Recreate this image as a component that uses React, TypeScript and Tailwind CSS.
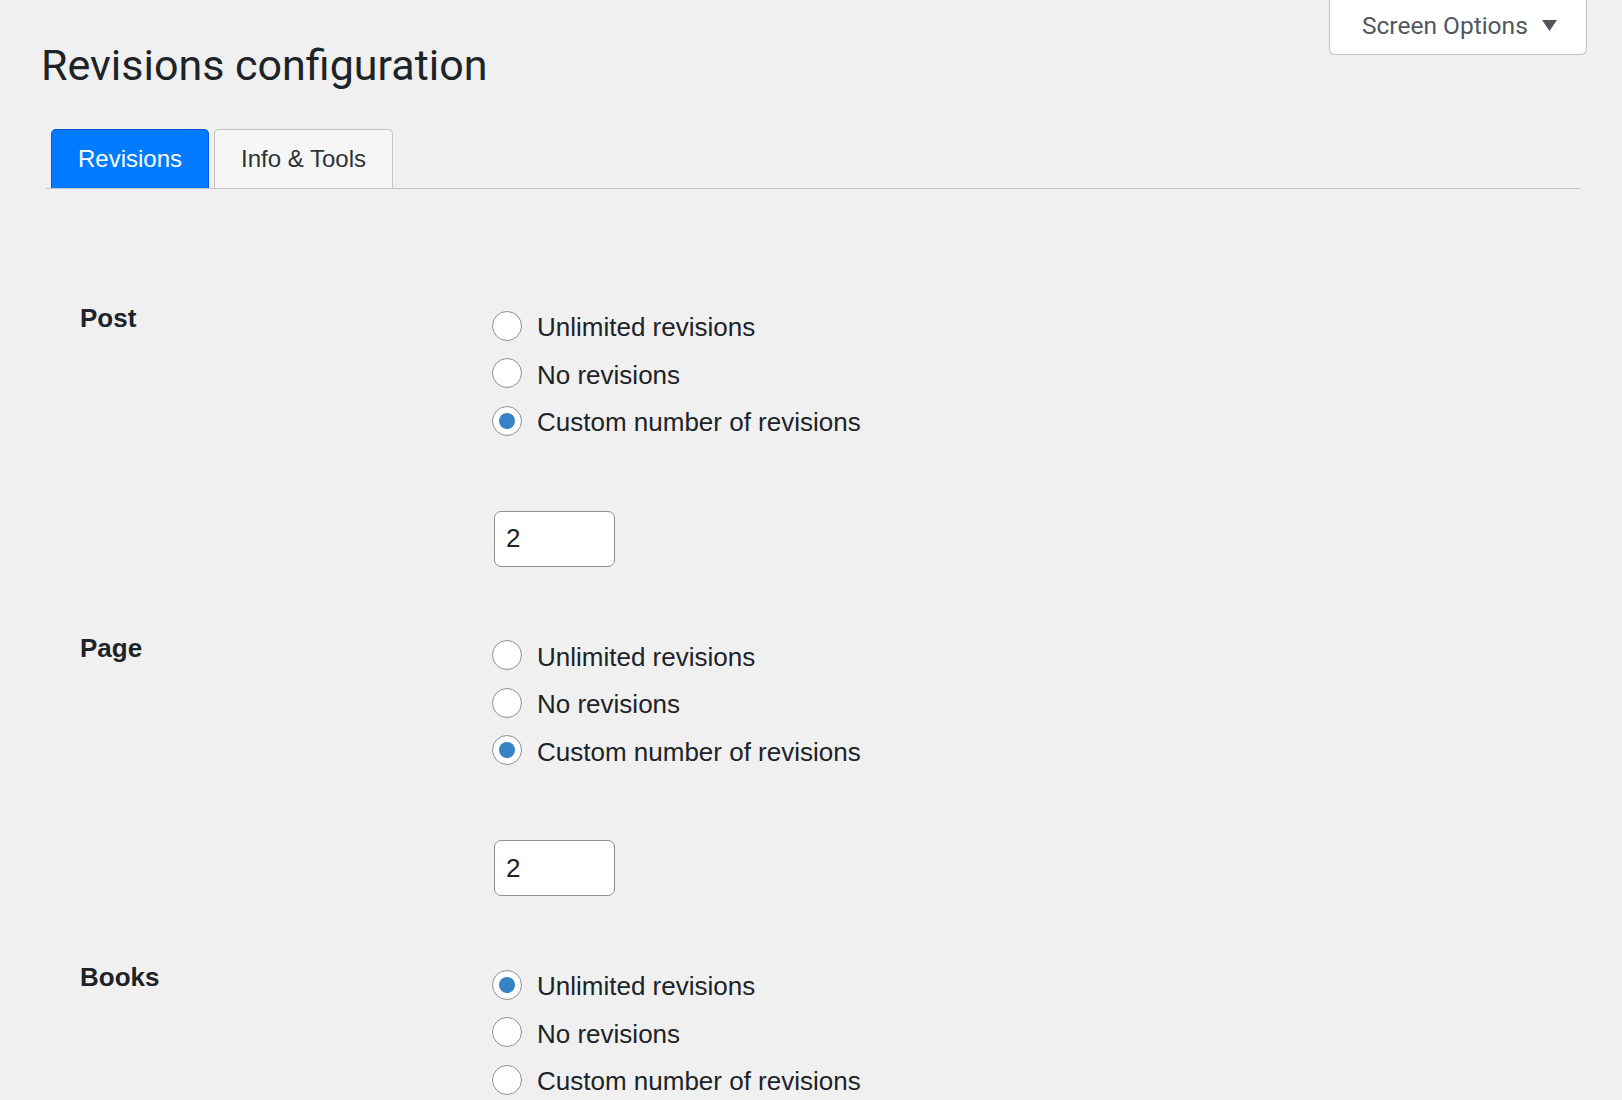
import React from "react";

type Choice = "unlimited" | "none" | "custom";

type PostTypeRow = {
  label: string;
  choice: Choice;
  count: number;
};

const rows: PostTypeRow[] = [
  { label: "Post", choice: "custom", count: 2 },
  { label: "Page", choice: "custom", count: 2 },
  { label: "Books", choice: "unlimited", count: 5 },
];

const options: { value: Choice; text: string }[] = [
  { value: "unlimited", text: "Unlimited revisions" },
  { value: "none", text: "No revisions" },
  { value: "custom", text: "Custom number of revisions" },
];

function Radio({ checked }: { checked: boolean }) {
  return (
    <span className="flex h-[30px] w-[30px] shrink-0 items-center justify-center rounded-full border border-[#8c8f94] bg-white">
      {checked && <span className="h-[16px] w-[16px] rounded-full bg-[#3582c4]" />}
    </span>
  );
}

function Section({ row }: { row: PostTypeRow }) {
  return (
    <div className="flex pb-[65px]">
      <div className="w-[412px] shrink-0 pt-[1px] text-[26px] font-bold leading-[30px] text-[#1d2327]">
        {row.label}
      </div>
      <div className="flex flex-col">
        {options.map((opt) => (
          <label key={opt.value} className="flex h-[47.5px] items-center gap-[15px]">
            <Radio checked={row.choice === opt.value} />
            <span className="translate-y-[2px] text-[26px] text-[#1d2327]">{opt.text}</span>
          </label>
        ))}
        <input
          type="text"
          readOnly
          value={row.count}
          className="ml-[2px] mt-[66px] h-[56px] w-[121px] rounded-[7px] border border-[#8c8f94] bg-white pl-[11px] text-[26px] text-[#1d2327] outline-none"
        />
      </div>
    </div>
  );
}

export default function App() {
  return (
    <div className="min-h-screen bg-[#f0f0f1] pl-[40px] pr-[35px] font-['Liberation_Sans',Arial,sans-serif]">
      {/* header */}
      <div className="flex items-start justify-between">
        <h1 className="ml-[1px] mt-[35px] font-['Roboto',sans-serif] text-[43px] font-normal leading-[60px] text-[#1d2327]">
          Revisions configuration
        </h1>
        <button className="flex h-[55px] w-[258px] items-center gap-[14px] rounded-b-[6px] border border-t-0 border-[#c3c4c7] bg-white pb-[1px] pl-[32px] font-['Roboto',sans-serif] text-[24.5px] text-[#50575e]">
          Screen Options
          <svg width="15" height="11" viewBox="0 0 15 11" className="mt-[-3px]">
            <polygon points="0,0 15,0 7.5,11" fill="#50575e" />
          </svg>
        </button>
      </div>

      {/* tabs */}
      <div className="ml-[6px] mr-[7px] mt-[34px] flex items-end gap-[5px] border-b border-[#c3c4c7] pl-[5px]">
        <div className="flex h-[59px] items-center rounded-t-[5px] border border-b-0 border-[#0a4fe0] bg-[#007bff] px-[26px] text-[24px] text-white">
          Revisions
        </div>
        <div className="flex h-[59px] items-center rounded-t-[5px] border border-b-0 border-[#c3c4c7] bg-[#f6f6f6] px-[26px] text-[24px] text-[#2c3338]">
          Info &amp; Tools
        </div>
      </div>

      {/* form */}
      <div className="pl-[40px] pt-[113px]">
        {rows.map((row) => (
          <Section key={row.label} row={row} />
        ))}
      </div>
    </div>
  );
}
